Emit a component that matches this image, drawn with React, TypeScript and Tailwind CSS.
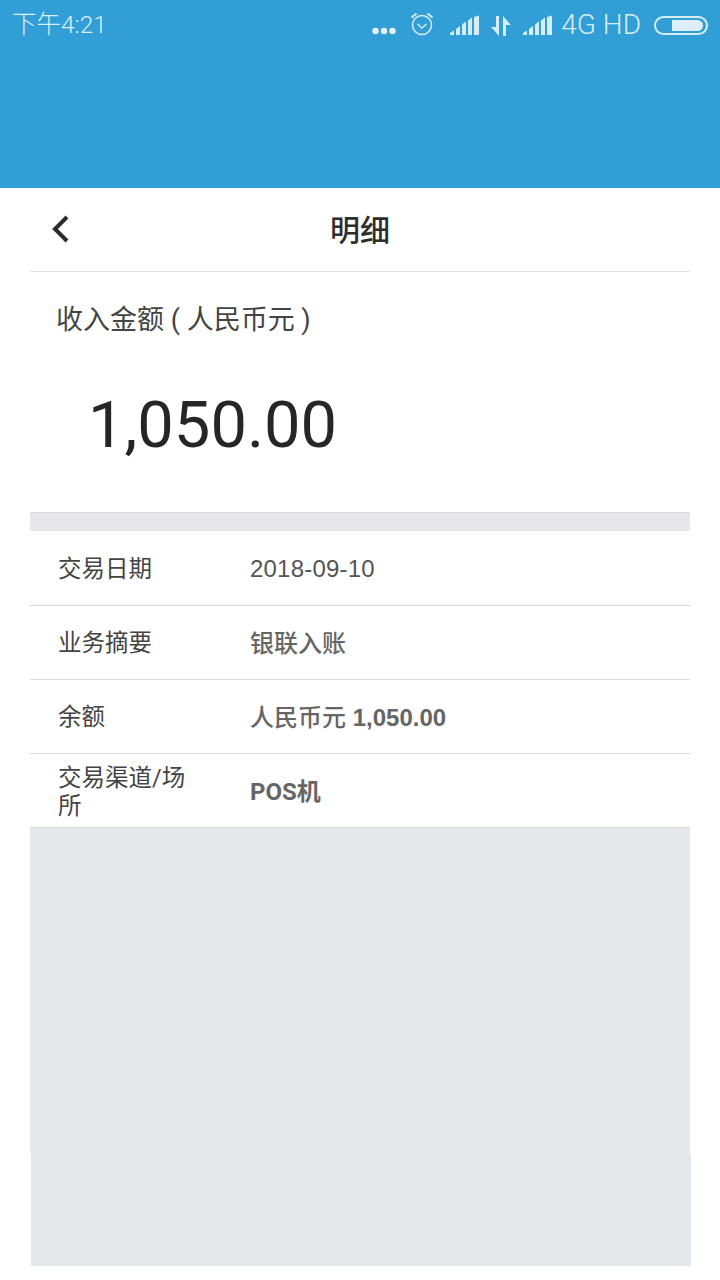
const cjk = { fontFamily: 'Roboto, "Noto Sans CJK SC", sans-serif' };
const helv = { fontFamily: '"Liberation Sans", "Noto Sans CJK SC", sans-serif' };

function Signal() {
  return (
    <svg width="30" height="22" viewBox="0 0 30 22" fill="#d6ecf7">
      <path d="M0 20v-2l4-2.500V20z" />
      <path d="M6 20v-6l4-3v9z" />
      <path d="M12 20V9.500l4-3V20z" />
      <path d="M18 20V5.500l4-3V20z" />
      <path d="M24 20V2l5-1.500V20z" />
    </svg>
  );
}

function StatusIcons() {
  return (
    <div className="flex items-center text-[#d6ecf7]">
      <svg width="24" height="8" viewBox="0 0 24 8" fill="#e6f3fa" className="mt-[11px]">
        <circle cx="3.500" cy="4" r="3.200" />
        <circle cx="12" cy="4" r="3.200" />
        <circle cx="20.500" cy="4" r="3.200" />
      </svg>
      <svg width="26" height="28" viewBox="0 0 26 28" fill="none" stroke="#d6ecf7" strokeWidth="1.500" className="ml-[13px] -mt-[3px]">
        <circle cx="13" cy="15" r="9.500" />
        <path d="M8.500 14l4.500 4 4.500-4" />
        <path d="M2.500 7.500l5-4M23.500 7.500l-5-4" strokeWidth="2" />
      </svg>
      <div className="ml-[15px] mt-[1px] flex"><Signal /></div>
      <svg width="20" height="22" viewBox="0 0 20 22" fill="#d6ecf7" className="ml-[11px] mt-[1px]">
        <path d="M5 1h3v20L0 12h5z" />
        <path d="M12 1l8 9h-5v11h-3z" />
      </svg>
      <div className="ml-[12px] mt-[1px] flex"><Signal /></div>
      <span className="ml-[8px] text-[28px] leading-[30px] font-light" style={{ fontFamily: 'Roboto, sans-serif' }}>4G HD</span>
      <div className="ml-[13px] flex h-[19px] w-[54px] items-center justify-end rounded-full border-2 border-[#d6ecf7] pr-[3px]">
        <div className="h-[11px] w-[31px] rounded-r-full bg-[#dceef8]" />
      </div>
    </div>
  );
}

function Row({ label, children, height, border = true, tight = false }: { label: string; children: React.ReactNode; height: string; border?: boolean; tight?: boolean }) {
  return (
    <div className={`flex items-center pl-[28px] ${height} ${border ? 'border-b border-[#d9d9dc]' : ''}`}>
      <div className={`w-[132px] shrink-0 pt-[3px] text-[23.500px] text-[#444] ${tight ? 'leading-[28px]' : ''}`}>{label}</div>
      <div className="ml-[60px] pt-[2px] text-[24px] text-[#666]" style={helv}>{children}</div>
    </div>
  );
}

export default function App() {
  return (
    <div className="flex h-[1280px] w-[720px] flex-col overflow-hidden bg-white" style={cjk}>
      <header className="h-[188px] shrink-0 bg-[#319fd5]">
        <div className="flex items-start justify-between pt-[10px] pr-[12px] pl-[12px]">
          <span className="text-[24.500px] leading-[30px] font-light text-[#dceef8]">下午4:21</span>
          <StatusIcons />
        </div>
      </header>

      <main className="flex flex-1 flex-col px-[30px]">
        <div className="relative flex h-[84px] shrink-0 items-center justify-center border-b border-[#e2e2e2] pt-[1px]">
          <svg width="24" height="32" viewBox="0 0 24 32" fill="none" stroke="#2c2c2c" strokeWidth="4" className="absolute top-[26px] left-[19px]">
            <path d="M18 3L6 15l12 12" />
          </svg>
          <h1 className="text-[30px] font-medium text-[#2e2e2e]">明细</h1>
        </div>

        <div className="flex h-[241px] shrink-0 flex-col border-b border-[#d9d9dc]">
          <p className="mt-[28px] pl-[26px] text-[27px] leading-[40px] text-[#444]">收入金额 ( 人民币元 )</p>
          <p className="mt-[45px] pl-[58px] text-[65px] leading-[80px] text-[#262626]">1,050.00</p>
        </div>

        <div className="h-[18px] shrink-0 bg-[#e7e7ea]" />

        <Row label="交易日期" height="h-[75px]"><span className="tracking-[0.2px] text-[#555]">2018-09-10</span></Row>
        <Row label="业务摘要" height="h-[74px]"><span className="font-medium">银联入账</span></Row>
        <Row label="余额" height="h-[74px]"><span className="font-medium">人民币元 <span className="font-bold">1,050.00</span></span></Row>
        <Row label="交易渠道/场所" height="h-[73px]" border={false} tight><span className="font-bold" style={cjk}>POS机</span></Row>

        <div className="h-[326px] shrink-0 border-t border-[#dadde0] bg-[#e4e8eb]" />
        <div className="ml-px h-[113px] w-[660px] shrink-0 bg-[#e4e8eb]" />
      </main>
    </div>
  );
}
